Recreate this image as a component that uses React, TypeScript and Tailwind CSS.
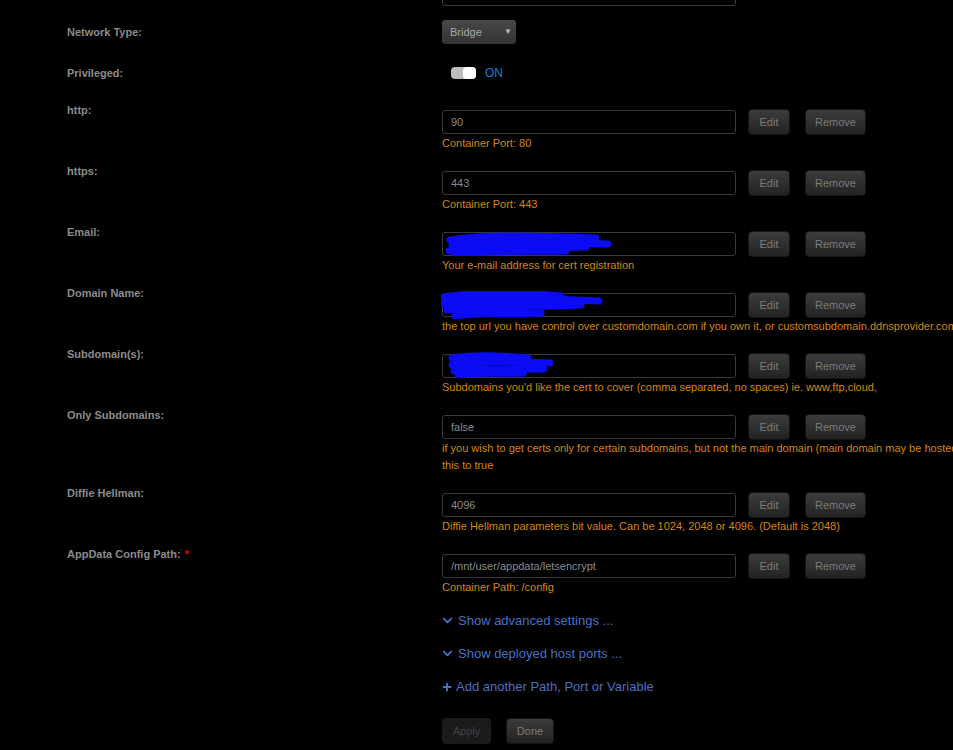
import { FaChevronDown, FaPlus } from "react-icons/fa"

type Row = {
  label: string
  value: string
  desc: React.ReactNode
  required?: boolean
  scribble?: "email" | "domain" | "sub"
}

const rows: Row[] = [
  { label: "http:", value: "90", desc: "Container Port: 80" },
  { label: "https:", value: "443", desc: "Container Port: 443" },
  { label: "Email:", value: "", desc: "Your e-mail address for cert registration", scribble: "email" },
  {
    label: "Domain Name:",
    value: "",
    desc: "the top url you have control over customdomain.com if you own it, or customsubdomain.ddnsprovider.com",
    scribble: "domain",
  },
  {
    label: "Subdomain(s):",
    value: "",
    desc: "Subdomains you'd like the cert to cover (comma separated, no spaces) ie. www,ftp,cloud,",
    scribble: "sub",
  },
  {
    label: "Only Subdomains:",
    value: "false",
    desc: (
      <>
        if you wish to get certs only for certain subdomains, but not the main domain (main domain may be hosted on another machine and cannot be validated), set
        <br />
        this to true
      </>
    ),
  },
  {
    label: "Diffie Hellman:",
    value: "4096",
    desc: "Diffie Hellman parameters bit value. Can be 1024, 2048 or 4096. (Default is 2048)",
  },
  { label: "AppData Config Path:", value: "/mnt/user/appdata/letsencrypt", desc: "Container Path: /config", required: true },
]

// blue marker strokes the user drew over private values
const scribbles = {
  email: { w: 165, h: 24, d: "M4 8 C40 2 90 4 150 6 M6 14 C50 8 110 10 162 12 M3 19 C45 14 100 16 140 15 M10 22 C40 18 80 20 120 19 M8 11 L150 10" },
  domain: { w: 162, h: 28, d: "M3 6 C40 0 90 2 120 5 M2 13 C50 6 110 8 158 10 M6 19 C45 14 100 16 140 14 M14 25 C40 20 80 24 100 22 M4 9 L130 12" },
  sub: { w: 106, h: 26, d: "M4 6 C30 2 60 4 80 6 M4 13 C40 8 70 10 102 11 M6 19 C35 15 70 18 96 17 M10 23 C30 20 55 22 75 21" },
}

function Scribble({ kind }: { kind: keyof typeof scribbles }) {
  const s = scribbles[kind]
  const pos =
    kind === "email" ? "left-[3px] -top-[1px]" : kind === "domain" ? "-left-[2px] -top-[3px]" : "left-[5px] -top-[3px]"
  return (
    <svg width={s.w} height={s.h} viewBox={`0 0 ${s.w} ${s.h}`} className={`absolute ${pos}`}>
      <path d={s.d} fill="none" stroke="#0b0bf5" strokeWidth="7" strokeLinecap="round" strokeLinejoin="round" />
    </svg>
  )
}

function TextInput({ value, scribble }: { value: string; scribble?: Row["scribble"] }) {
  return (
    <div className="relative w-[294px] h-[24px] rounded-[3px] border border-[#3a3a3a] bg-black shadow-[inset_0_1px_3px_rgba(0,0,0,0.9)] px-[8px] flex items-center text-[11px] text-[#8a8a8a]">
      {value}
      {scribble && <Scribble kind={scribble} />}
    </div>
  )
}

function Btn({ children, className = "" }: { children: React.ReactNode; className?: string }) {
  return (
    <div
      className={`h-[26px] flex items-center justify-center rounded-[4px] border border-[#161616] bg-gradient-to-b from-[#3c3c3c] to-[#232323] text-[11px] text-[#7c7c7c] ${className}`}
    >
      {children}
    </div>
  )
}

export default function App() {
  return (
    <div
      className="min-h-[750px] w-[953px] overflow-hidden bg-black pl-[67px]"
      style={{ fontFamily: '"Liberation Sans", Arial, sans-serif' }}
    >
      {/* partially scrolled-off row */}
      <div className="flex -mt-[18px]">
        <div className="w-[375px] shrink-0" />
        <TextInput value="" />
      </div>

      {/* Network Type */}
      <div className="flex items-center mt-[14px] h-[24px]">
        <div className="w-[375px] shrink-0 text-[11px] font-bold text-[#8b8b8b]">Network Type:</div>
        <div className="w-[74px] h-[24px] rounded-[3px] bg-gradient-to-b from-[#484848] to-[#333] shadow-[0_1px_2px_rgba(0,0,0,0.8)] flex items-center justify-between pl-[8px] pr-[4px] text-[11px] text-[#a8a8a8]">
          <span>Bridge</span>
          <span className="text-[8px] text-[#bbb]">▼</span>
        </div>
      </div>

      {/* Privileged */}
      <div className="flex items-center mt-[17px] h-[24px]">
        <div className="w-[375px] shrink-0 text-[11px] font-bold text-[#8b8b8b]">Privileged:</div>
        <div className="ml-[9px] w-[25px] h-[12px] rounded-[4px] bg-[#bdbdbd] flex justify-end">
          <div className="w-[13px] h-[12px] rounded-[4px] bg-white" />
        </div>
        <span className="ml-[9px] text-[12px] text-[#1481d6]">ON</span>
      </div>

      {/* port / variable rows */}
      <div className="mt-[17px]">
        {rows.map((r) => (
          <div key={r.label} className="flex mb-[11px]">
            <div className="w-[375px] shrink-0 text-[11px] leading-[16px] font-bold text-[#8b8b8b]">
              {r.label}
              {r.required && <span className="text-[#e00] ml-[4px]">*</span>}
            </div>
            <div className="pt-[7px] w-[700px]">
              <div className="flex items-center">
                <TextInput value={r.value} scribble={r.scribble} />
                <Btn className="ml-[12px] w-[42px]">Edit</Btn>
                <Btn className="ml-[15px] w-[61px]">Remove</Btn>
              </div>
              <div className="text-[11px] leading-[17px] text-[#d4850f] whitespace-nowrap">{r.desc}</div>
            </div>
          </div>
        ))}
      </div>

      {/* links and actions */}
      <div className="ml-[375px] -mt-[3px] text-[13px] text-[#4a70c4]">
        <div className="h-[33px] flex items-center gap-[5px]">
          <FaChevronDown size={11} />
          <span>Show advanced settings ...</span>
        </div>
        <div className="h-[33px] flex items-center gap-[5px]">
          <FaChevronDown size={11} />
          <span>Show deployed host ports ...</span>
        </div>
        <div className="h-[33px] flex items-center gap-[4px]">
          <FaPlus size={10} />
          <span>Add another Path, Port or Variable</span>
        </div>
        <div className="flex mt-[15px] gap-[15px]">
          <div className="w-[49px] h-[26px] rounded-[4px] bg-[#1b1b1b] flex items-center justify-center text-[11px] text-[#444]">
            Apply
          </div>
          <Btn className="w-[48px]">Done</Btn>
        </div>
      </div>
    </div>
  )
}
